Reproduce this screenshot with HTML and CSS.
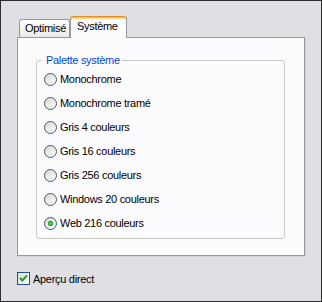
FILE: index.html
```html
<!DOCTYPE html>
<html lang="fr">
<head>
    <meta charset="UTF-8">
    <title>Palette</title>
    <link rel="stylesheet" href="styles.css">
</head>
<body>
    <div class="window">
        <div class="tabs">
            <div class="tab tab-first">Optimisé</div>
            <div class="tab tab-active">Système</div>
        </div>

        <div class="panel">
            <fieldset class="group">
                <legend>Palette système</legend>
                <label class="option"><span class="radio"></span>Monochrome</label>
                <label class="option"><span class="radio"></span>Monochrome tramé</label>
                <label class="option"><span class="radio"></span>Gris 4 couleurs</label>
                <label class="option"><span class="radio"></span>Gris 16 couleurs</label>
                <label class="option"><span class="radio"></span>Gris 256 couleurs</label>
                <label class="option"><span class="radio"></span>Windows 20 couleurs</label>
                <label class="option"><span class="radio radio-on"></span>Web 216 couleurs</label>
            </fieldset>
        </div>

        <label class="check">
            <span class="box">
                <svg width="11" height="11" viewBox="0 0 11 11">
                    <path d="M2 5 L4.3 7.5 L9 2.5" fill="none" stroke="#21a121" stroke-width="2"/>
                </svg>
            </span>
            Aperçu direct
        </label>
    </div>
</body>
</html>
```

FILE: styles.css
```css
body {
    margin: 0;
    font-family: "Liberation Sans", Arial, sans-serif;
    font-size: 11px;
    letter-spacing: -0.3px;
    color: #000;
}

.window {
    width: 322px;
    height: 302px;
    box-sizing: border-box;
    border: 1px solid #2e2e2e;
    background: #e0dfe3;
    padding: 15px 16px 0 16px;
}

.tabs {
    display: flex;
    align-items: flex-end;
    height: 21px;
    padding-left: 2px;
    position: relative;
    z-index: 1;
}

.tab {
    box-sizing: border-box;
    height: 18px;
    border: 1px solid #919b9c;
    border-bottom: none;
    border-radius: 3px 3px 0 0;
    line-height: 13px;
    white-space: nowrap;
}

.tab-first {
    width: 51px;
    padding: 2px 0 0 5px;
    background: linear-gradient(#ffffff, #ecebe6);
}

.tab-active {
    width: 57px;
    height: 22px;
    margin-bottom: -1px;
    padding: 3px 0 0 6px;
    background: #fcfcfe;
    border-top: 1px solid #e68b2c;
    box-shadow: inset 0 1px 0 #ffc73c, inset 0 2px 0 #ffd98a;
}

.panel {
    box-sizing: border-box;
    height: 219px;
    border: 1px solid #919b9c;
    background: #fcfcfe;
    box-shadow: 1px 1px 0 #d2d2d6;
    padding-top: 15px;
}

.group {
    margin: 0 19px 0 18px;
    padding: 0 0 3px 7px;
    border: 1px solid #c9c9c4;
    border-radius: 3px;
}

.group legend {
    margin-left: -2px;
    padding: 0 2px 0 4px;
    line-height: 14px;
    color: #0046d5;
}

.option {
    display: flex;
    align-items: center;
    height: 24px;
}

.radio {
    width: 13px;
    height: 13px;
    box-sizing: border-box;
    margin-right: 3px;
    border: 1px solid #3a5a84;
    border-radius: 50%;
    background: linear-gradient(135deg, #d6d6d0, #ffffff);
}

.radio-on {
    background: radial-gradient(circle, #6ee06e 0, #21a121 2.5px, transparent 3px),
                linear-gradient(135deg, #d6d6d0, #ffffff);
}

.check {
    display: flex;
    align-items: center;
    height: 15px;
    margin-top: 15px;
}

.box {
    display: flex;
    align-items: center;
    justify-content: center;
    width: 13px;
    height: 13px;
    box-sizing: border-box;
    margin-right: 3px;
    border: 1px solid #1c5180;
    background: linear-gradient(135deg, #dcdcd7, #ffffff);
}
```
